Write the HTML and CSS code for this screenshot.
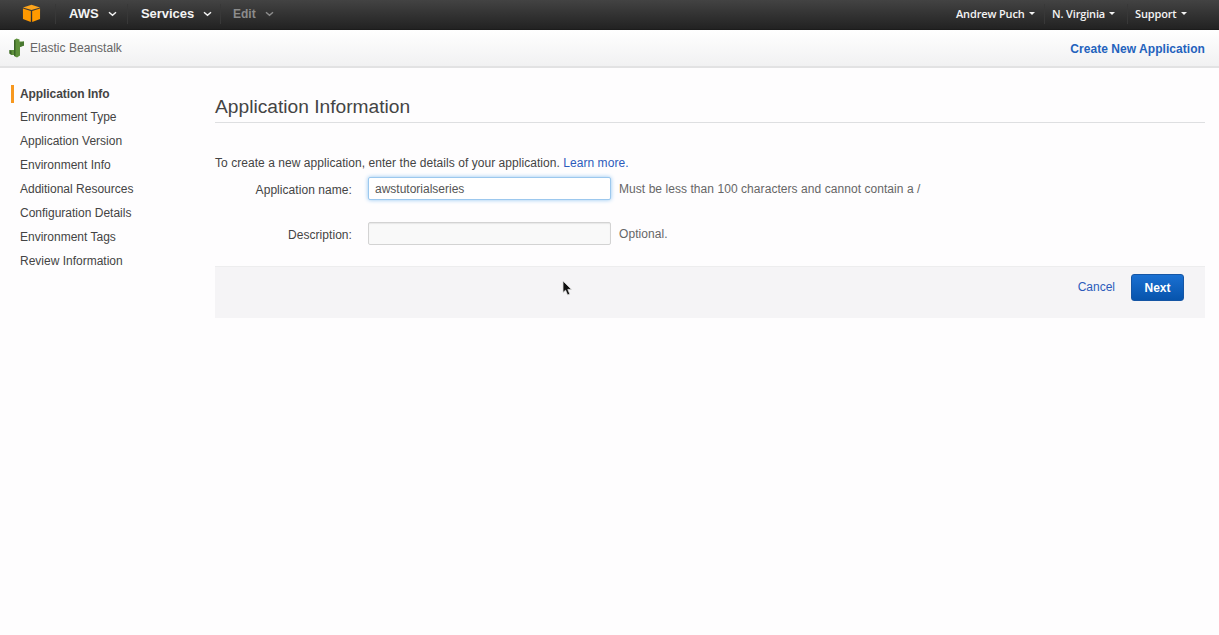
FILE: index.html
```html
<!DOCTYPE html>
<html lang="en">
<head>
<meta charset="utf-8">
<title>Elastic Beanstalk</title>
<link rel="stylesheet" href="styles.css">
</head>
<body>
<header class="topbar">
  <svg class="logo" width="19" height="19" viewBox="0 0 20 20">
    <path d="M1 3.600 10 .8l9 2.800L10 6.200z" fill="#fca41c"/>
    <path d="M1 4.800 9.300 7.300v11.600L1 15.900z" fill="#f90"/>
    <path d="M19 4.800 10.700 7.300v11.600l8.300-3z" fill="#f90"/>
  </svg>
  <nav class="menu">
    <a class="item aws">AWS<svg class="chev" width="9" height="6" viewBox="0 0 9 6"><path d="M1 1.200l3.500 3L8 1.200"/></svg></a>
    <a class="item services">Services<svg class="chev" width="9" height="6" viewBox="0 0 9 6"><path d="M1 1.200l3.500 3L8 1.200"/></svg></a>
    <a class="item edit">Edit<svg class="chev" width="9" height="6" viewBox="0 0 9 6"><path d="M1 1.200l3.500 3L8 1.200"/></svg></a>
  </nav>
  <nav class="account">
    <a class="acct user">Andrew Puch<i class="caret"></i></a>
    <a class="acct region">N. Virginia<i class="caret"></i></a>
    <a class="acct support">Support<i class="caret"></i></a>
  </nav>
</header>
<div class="servicebar">
  <svg class="bean" width="16" height="20" viewBox="0 0 16 20">
    <path d="M5 2 7.500.5 10.500 1.500V3.500H15V7.500L11 9v8.500L8 19.500l-3-1.500V17H2.500L.5 15.500v-3.500H5z" fill="#5f913c"/>
    <path d="M5 2 6.500 2.500v16L5 17.500zM.5 12 2.500 13v4L.5 15.500z" fill="#3b6427"/>
    <path d="M11 4.500 15 3.500v4L11 9z" fill="#497832"/>
  </svg>
  <span class="service">Elastic Beanstalk</span>
  <a class="create">Create New Application</a>
</div>
<div class="page">
  <ul class="steps">
    <li class="step current">Application Info</li>
    <li class="step">Environment Type</li>
    <li class="step">Application Version</li>
    <li class="step">Environment Info</li>
    <li class="step">Additional Resources</li>
    <li class="step">Configuration Details</li>
    <li class="step">Environment Tags</li>
    <li class="step">Review Information</li>
  </ul>
  <main class="content">
    <h1 class="title">Application Information</h1>
    <p class="intro">To create a new application, enter the details of your application. <a class="link">Learn more.</a></p>
    <div class="row">
      <label class="label" for="name">Application name:</label>
      <input class="field active" id="name" type="text" value="awstutorialseries">
      <span class="hint">Must be less than 100 characters and cannot contain a /</span>
    </div>
    <div class="row second">
      <label class="label" for="desc">Description:</label>
      <input class="field" id="desc" type="text">
      <span class="hint">Optional.</span>
    </div>
    <div class="actions">
      <a class="link">Cancel</a>
      <button class="next">Next</button>
    </div>
  </main>
</div>
<svg class="pointer" width="11" height="17" viewBox="0 0 11 17"><path d="M1 1v11.500l2.600-2.300 2 4.800 2.200-.9-2-4.700h3.700z" fill="#111" stroke="#ddd" stroke-width=".8"/></svg>
</body>
</html>
```
FILE: styles.css
```css
* { box-sizing: border-box; }
body {
  margin: 0;
  height: 635px;
  overflow: hidden;
  background: #fefdfe;
  color: #444;
  font: 12px/16px "Liberation Sans", Arial, sans-serif;
}
.topbar {
  display: flex;
  align-items: center;
  height: 30px;
  padding: 0 20px 2px 22px;
  background: linear-gradient(#434343, #222);
  border-bottom: 1px solid #1c1c1c;
  color: #f4f4f4;
}
.logo { margin-right: 14px; }
.menu, .account { display: flex; align-items: center; }
.item {
  display: flex;
  align-items: center;
  height: 20px;
  padding-left: 13px;
  border-left: 1px solid #383838;
  font-size: 13px;
  font-weight: bold;
}
.aws { width: 72px; }
.services { width: 93px; letter-spacing: -0.05px; }
.edit { color: #8c8c8c; font-size: 12px; padding-left: 12px; }
.chev {
  margin: 1px 0 0 9px;
  fill: none;
  stroke: currentColor;
  stroke-width: 1.5;
}
.account {
  margin-left: auto;
  font: 600 11px/16px "Open Sans", sans-serif;
  letter-spacing: -0.15px;
}
.acct { display: flex; align-items: center; height: 20px; white-space: nowrap; }
.user { width: 88px; }
.region { width: 83px; border-left: 1px solid #383838; padding-left: 7px; }
.support { width: 72px; border-left: 1px solid #383838; padding-left: 7px; }
.caret {
  margin-left: 4px;
  border: 3px solid transparent;
  border-top-color: currentColor;
  border-bottom: 0;
}
.servicebar {
  display: flex;
  align-items: center;
  height: 38px;
  padding: 0 14px 0 9px;
  background: linear-gradient(#fff, #f1f1f2);
  border-bottom: 2px solid #e2e2e3;
}
.service { margin-left: 5px; color: #666; letter-spacing: 0.03px; }
.create { margin: 1px 0 0 auto; color: #2362bd; font-weight: bold; letter-spacing: 0.05px; }
.page { display: flex; padding-right: 14px; }
.steps {
  width: 204px;
  margin: 17px 0 0 11px;
  padding: 0;
  list-style: none;
}
.step {
  height: 18px;
  margin-bottom: 5.900px;
  padding-left: 6px;
  border-left: 3px solid transparent;
  line-height: 17px;
}
.current {
  margin-bottom: 6.300px;
  border-color: #f7981f;
  font-weight: bold;
  line-height: 18px;
  letter-spacing: -0.08px;
}
.content { flex: 1; }
.title {
  height: 55px;
  margin: 0;
  padding-top: 27px;
  border-bottom: 1px solid #dedfe1;
  font-size: 19.200px;
  font-weight: normal;
  line-height: 24px;
}
.intro { margin: 32px 0 6px; letter-spacing: 0.05px; }
.link { color: #2c5bbb; }
.row { display: flex; align-items: center; height: 23px; }
.second { margin-top: 22px; }
.label { width: 137px; padding-top: 3px; text-align: right; letter-spacing: 0.06px; }
.field {
  width: 243px;
  height: 23px;
  margin: 0 8px 0 16px;
  padding: 1px 6px 0;
  border: 1px solid #d3d3d3;
  border-radius: 2px;
  background: #f9f9f9;
  box-shadow: inset 0 1px 1px #e7e7e7;
  color: #555;
  font: inherit;
}
.active {
  border-color: #9cc8ee;
  background: #fff;
  box-shadow: 0 0 4px #91c5f2;
}
.hint { color: #666; letter-spacing: 0.06px; }
.actions {
  display: flex;
  align-items: center;
  justify-content: flex-end;
  height: 52px;
  margin-top: 21px;
  padding: 0 21px 11px 0;
  background: #f5f4f6;
  border-top: 1px solid #ededee;
}
.next {
  width: 53px;
  height: 27px;
  margin-left: 16px;
  padding: 1px 0 0;
  border: 1px solid #1556a5;
  border-radius: 3px;
  background: linear-gradient(#1a70d2, #0754ac);
  color: #fff;
  font: bold 12px "Liberation Sans", Arial, sans-serif;
}
.pointer { position: absolute; left: 562px; top: 280px; }
```
